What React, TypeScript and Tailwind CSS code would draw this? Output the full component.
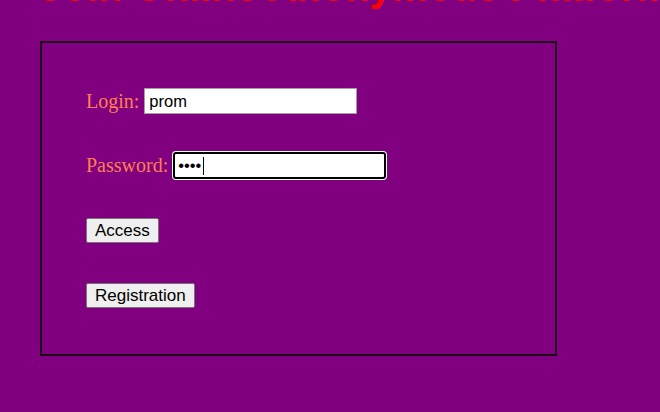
export default function App() {
  return (
    <div className="min-h-[412px] overflow-hidden bg-[#800080] pl-[40px] font-['Liberation_Serif',serif]">
      <h1 className="mt-[-36px] whitespace-nowrap font-['Liberation_Sans',Arial,sans-serif] text-[40px] font-bold leading-[46px] text-[#ff0000]">
        Join Online Anonymous Platform
      </h1>

      <div className="mt-[31px] h-[315px] w-[517px] border-2 border-[#1c0a1c] pl-[44px] pt-[45px]">
        <div className="flex h-[26px] items-center gap-[5px]">
          <label className="text-[20px] text-[#ff7f50]">Login:</label>
          <input
            type="text"
            defaultValue="prom"
            className="h-[26px] w-[213px] border border-[#a0a0a0] bg-white px-[4px] font-['Liberation_Sans',Arial,sans-serif] text-[16.5px] text-black outline-none"
          />
        </div>

        <div className="mt-[38px] flex h-[26px] items-center gap-[5px]">
          <label className="text-[20px] text-[#ff7f50]">Password:</label>
          <div className="relative">
            <input
              type="password"
              defaultValue="abcd"
              className="h-[27px] w-[213px] rounded-[3px] border-2 border-black bg-white px-[3px] font-['Liberation_Sans',Arial,sans-serif] text-[16.5px] text-black outline-none ring-1 ring-white"
            />
            <span className="absolute left-[30px] top-[5px] h-[18px] w-px bg-black" />
          </div>
        </div>

        <div className="mt-[40px]">
          <button className="h-[25px] rounded-[2px] border border-[#767676] bg-[#efefef] px-[8px] font-['Liberation_Sans',Arial,sans-serif] text-[17px] leading-none text-black">
            Access
          </button>
        </div>

        <div className="mt-[40px]">
          <button className="h-[25px] rounded-[2px] border border-[#767676] bg-[#efefef] px-[8px] font-['Liberation_Sans',Arial,sans-serif] text-[17px] leading-none text-black">
            Registration
          </button>
        </div>
      </div>
    </div>
  );
}
